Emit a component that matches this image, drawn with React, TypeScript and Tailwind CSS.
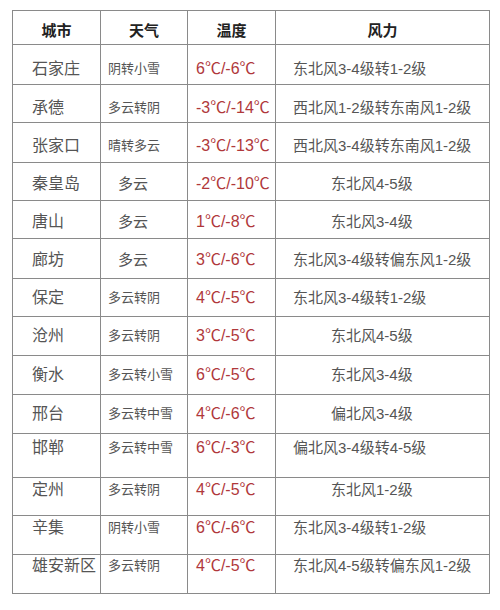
const rows = [
  { city: "石家庄", weather: "阴转小雪", wx: "pl-[7px] text-[13px]", temp: "6℃/-6℃", wind: "东北风3-4级转1-2级", wd: "pl-[17px]", h: "h-[40px]", pt: "pt-[14px]" },
  { city: "承德", weather: "多云转阴", wx: "pl-[7px] text-[13px]", temp: "-3℃/-14℃", wind: "西北风1-2级转东南风1-2级", wd: "pl-[17px]", h: "h-[38px]", pt: "pt-[13px]" },
  { city: "张家口", weather: "晴转多云", wx: "pl-[7px] text-[13px]", temp: "-3℃/-13℃", wind: "西北风3-4级转东南风1-2级", wd: "pl-[17px]", h: "h-[40px]", pt: "pt-[13px]" },
  { city: "秦皇岛", weather: "多云", wx: "pl-[17px] text-[15px]", temp: "-2℃/-10℃", wind: "东北风4-5级", wd: "pl-[55px]", h: "h-[38px]", pt: "pt-[11px]" },
  { city: "唐山", weather: "多云", wx: "pl-[17px] text-[15px]", temp: "1℃/-8℃", wind: "东北风3-4级", wd: "pl-[55px]", h: "h-[38px]", pt: "pt-[11px]" },
  { city: "廊坊", weather: "多云", wx: "pl-[17px] text-[15px]", temp: "3℃/-6℃", wind: "东北风3-4级转偏东风1-2级", wd: "pl-[17px]", h: "h-[40px]", pt: "pt-[11px]" },
  { city: "保定", weather: "多云转阴", wx: "pl-[7px] text-[13px]", temp: "4℃/-5℃", wind: "东北风3-4级转1-2级", wd: "pl-[17px]", h: "h-[38px]", pt: "pt-[9px]" },
  { city: "沧州", weather: "多云转阴", wx: "pl-[7px] text-[13px]", temp: "3℃/-5℃", wind: "东北风4-5级", wd: "pl-[55px]", h: "h-[39px]", pt: "pt-[9px]" },
  { city: "衡水", weather: "多云转小雪", wx: "pl-[7px] text-[13px]", temp: "6℃/-5℃", wind: "东北风3-4级", wd: "pl-[55px]", h: "h-[39px]", pt: "pt-[9px]" },
  { city: "邢台", weather: "多云转中雪", wx: "pl-[7px] text-[13px]", temp: "4℃/-6℃", wind: "偏北风3-4级", wd: "pl-[55px]", h: "h-[39px]", pt: "pt-[9px]" },
  { city: "邯郸", weather: "多云转中雪", wx: "pl-[7px] text-[13px]", temp: "6℃/-3℃", wind: "偏北风3-4级转4-5级", wd: "pl-[17px]", h: "h-[44px]", pt: "pt-[4px]" },
  { city: "定州", weather: "多云转阴", wx: "pl-[7px] text-[13px]", temp: "4℃/-5℃", wind: "东北风1-2级", wd: "pl-[55px]", h: "h-[38px]", pt: "pt-[2px]" },
  { city: "辛集", weather: "阴转小雪", wx: "pl-[7px] text-[13px]", temp: "6℃/-6℃", wind: "东北风3-4级转1-2级", wd: "pl-[17px]", h: "h-[39px]", pt: "pt-[2px]" },
  { city: "雄安新区", weather: "多云转阴", wx: "pl-[7px] text-[13px]", temp: "4℃/-5℃", wind: "东北风4-5级转偏东风1-2级", wd: "pl-[17px]", h: "h-[39px]", pt: "pt-[1px]" },
];

const cell = "border-r border-b border-[#8a8a8a] leading-[20px] whitespace-nowrap";

export default function App() {
  return (
    <div
      className="w-[500px] h-[610px] bg-white pl-[12px] pt-[10px]"
      style={{ fontFamily: '"Liberation Sans", "Noto Sans CJK SC", sans-serif' }}
    >
      <div className="grid grid-cols-[88px_87px_88px_214px] w-fit border-l border-t border-[#8a8a8a]">
        {["城市", "天气", "温度", "风力"].map((t) => (
          <div key={t} className={`${cell} h-[34px] pt-[10px] text-center text-[15px] font-bold text-[#222]`}>
            {t}
          </div>
        ))}
        {rows.map((r) => (
          <div key={r.city} className="contents">
            <div className={`${cell} ${r.h} ${r.pt} pl-[19px] text-[16px] text-[#555]`}>{r.city}</div>
            <div className={`${cell} ${r.h} ${r.pt} ${r.wx} text-[#555]`}>{r.weather}</div>
            <div className={`${cell} ${r.h} ${r.pt} pl-[8px] text-[16px] text-[#b0383b]`}>{r.temp}</div>
            <div className={`${cell} ${r.h} ${r.pt} ${r.wd} text-[15px] text-[#555]`}>{r.wind}</div>
          </div>
        ))}
      </div>
    </div>
  );
}
